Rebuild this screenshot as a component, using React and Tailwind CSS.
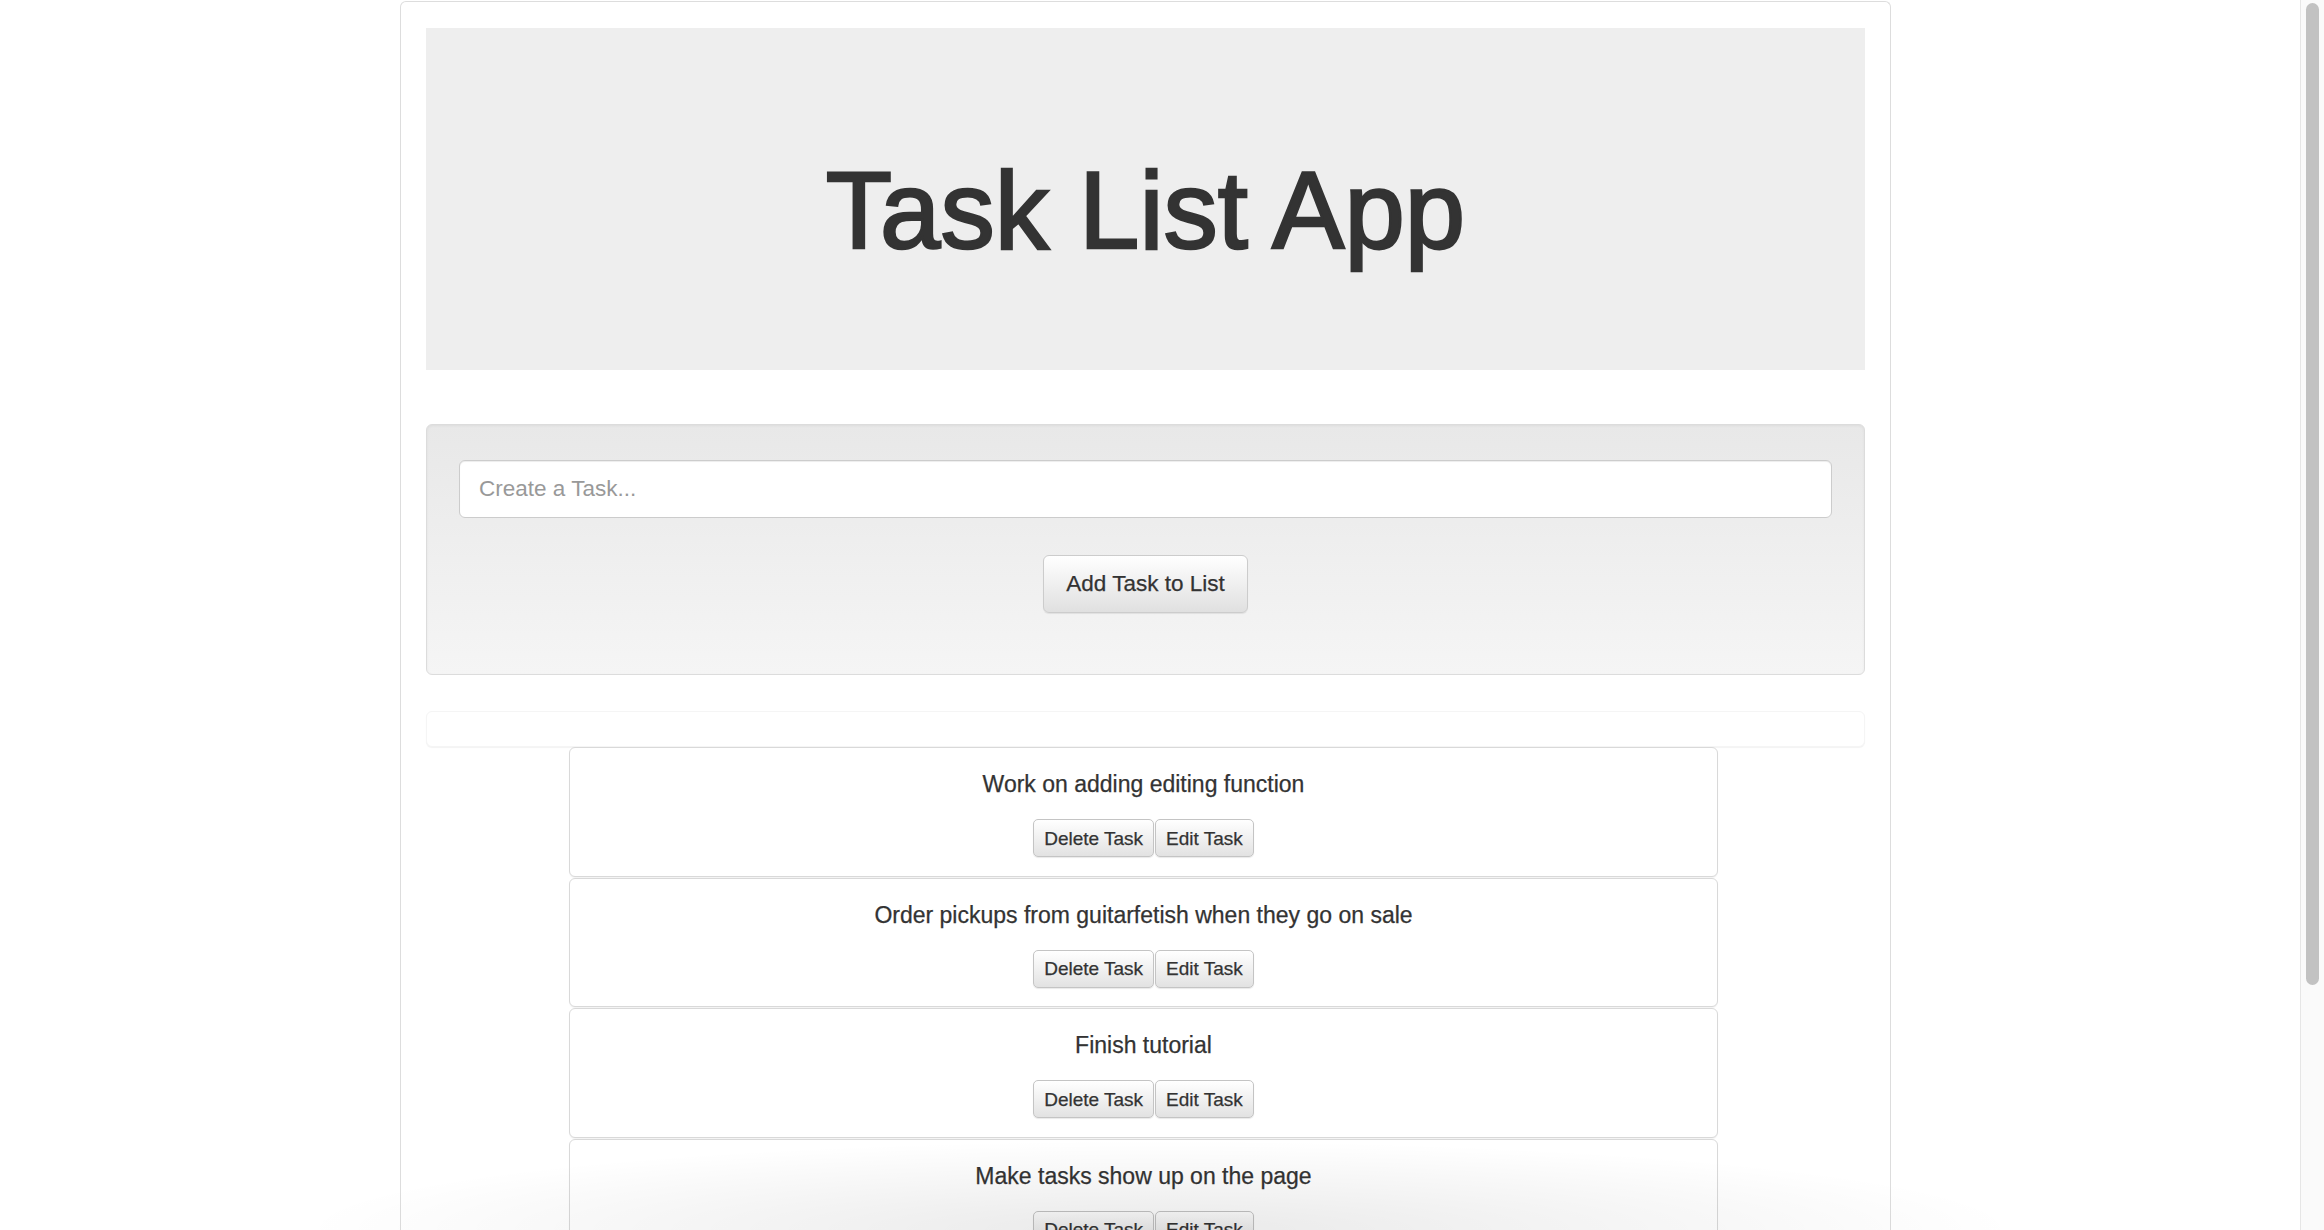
import React from "react";

const tasks = [
  "Work on adding editing function",
  "Order pickups from guitarfetish when they go on sale",
  "Finish tutorial",
  "Make tasks show up on the page",
];

function SmallButton({ children }) {
  return (
    <button
      type="button"
      className="h-[38px] px-[10px] border border-[#c4c4c4] rounded-[5px] bg-[linear-gradient(to_bottom,#ffffff,#e2e2e2)] shadow-[inset_0_1px_0_rgba(255,255,255,0.15),0_1px_1px_rgba(0,0,0,0.09)] text-[19px] leading-none text-[#333] [-webkit-text-stroke:0.25px_#333]"
    >
      {children}
    </button>
  );
}

function TaskCard({ text }) {
  return (
    <div className="h-[129.5px] border border-[#d9d9d9] rounded-[6px] bg-white shadow-[0_1px_1px_rgba(0,0,0,0.05)] flex flex-col items-center pt-[23px]">
      <div className="text-[23px] leading-[26px] text-[#333] [-webkit-text-stroke:0.25px_#333]">{text}</div>
      <div className="mt-[22px] flex gap-px">
        <SmallButton>Delete Task</SmallButton>
        <SmallButton>Edit Task</SmallButton>
      </div>
    </div>
  );
}

export default function App() {
  return (
    <div className="relative flex h-[1230px] w-[2324px] overflow-hidden bg-white font-['Liberation_Sans','Helvetica',Arial,sans-serif] text-[#333]">
      <div className="w-[2300px] h-full">
        <div className="ml-[400px] mt-px w-[1491px] h-[1400px] border border-b-0 border-[#dddddd] rounded-t-[6px] px-[25px] pt-[26px]">
          {/* Jumbotron */}
          <div className="h-[342px] bg-[#eeeeee] flex flex-col items-center pt-[123px]">
            <h1 className="text-[108.5px] leading-[120px] font-normal text-[#333] [-webkit-text-stroke:2.5px_#333]">Task List App</h1>
          </div>

          {/* Well with form */}
          <div className="mt-[54px] border border-[#dcdcdc] rounded-[6px] bg-[linear-gradient(to_bottom,#e8e8e8,#f5f5f5)] shadow-[inset_0_1px_3px_rgba(0,0,0,0.05),0_1px_0_rgba(255,255,255,0.1)] px-[32px] pt-[35px] pb-[61px] flex flex-col items-center">
            <input
              type="text"
              placeholder="Create a Task..."
              className="w-full h-[58px] bg-white border border-[#cccccc] rounded-[6px] pl-[19px] text-[22.5px] text-[#333] placeholder:text-[#999] shadow-[inset_0_1px_1px_rgba(0,0,0,0.075)] outline-none"
            />
            <button
              type="button"
              className="mt-[37px] h-[58px] px-[22px] border border-[#cccccc] rounded-[6px] bg-[linear-gradient(to_bottom,#ffffff,#e0e0e0)] shadow-[inset_0_1px_0_rgba(255,255,255,0.15),0_1px_1px_rgba(0,0,0,0.075)] text-[22.5px] leading-none text-[#333] [-webkit-text-stroke:0.25px_#333]"
            >
              Add Task to List
            </button>
          </div>

          {/* Empty panel */}
          <div className="mt-[36px] h-[36px] border border-[#f5f5f5] rounded-[6px] bg-white shadow-[0_1px_1px_rgba(0,0,0,0.05)]" />

          {/* Task list */}
          <div className="ml-[143px] w-[1149px] flex flex-col gap-px">
            {tasks.map((t) => (
              <TaskCard key={t} text={t} />
            ))}
          </div>
        </div>
      </div>

      {/* Scrollbar */}
      <div className="w-[24px] h-full bg-[#fafafa] border-l border-[#e6e6e6]">
        <div className="mt-[3px] ml-[5px] w-[13px] h-[982px] rounded-full bg-[#c2c2c2]" />
      </div>

      {/* Bottom fade shadow overlay */}
      <div className="pointer-events-none absolute bottom-0 left-[300px] w-[1720px] h-[90px] bg-[radial-gradient(ellipse_50%_100%_at_50%_100%,rgba(0,0,0,0.085),rgba(0,0,0,0))]" />
    </div>
  );
}
